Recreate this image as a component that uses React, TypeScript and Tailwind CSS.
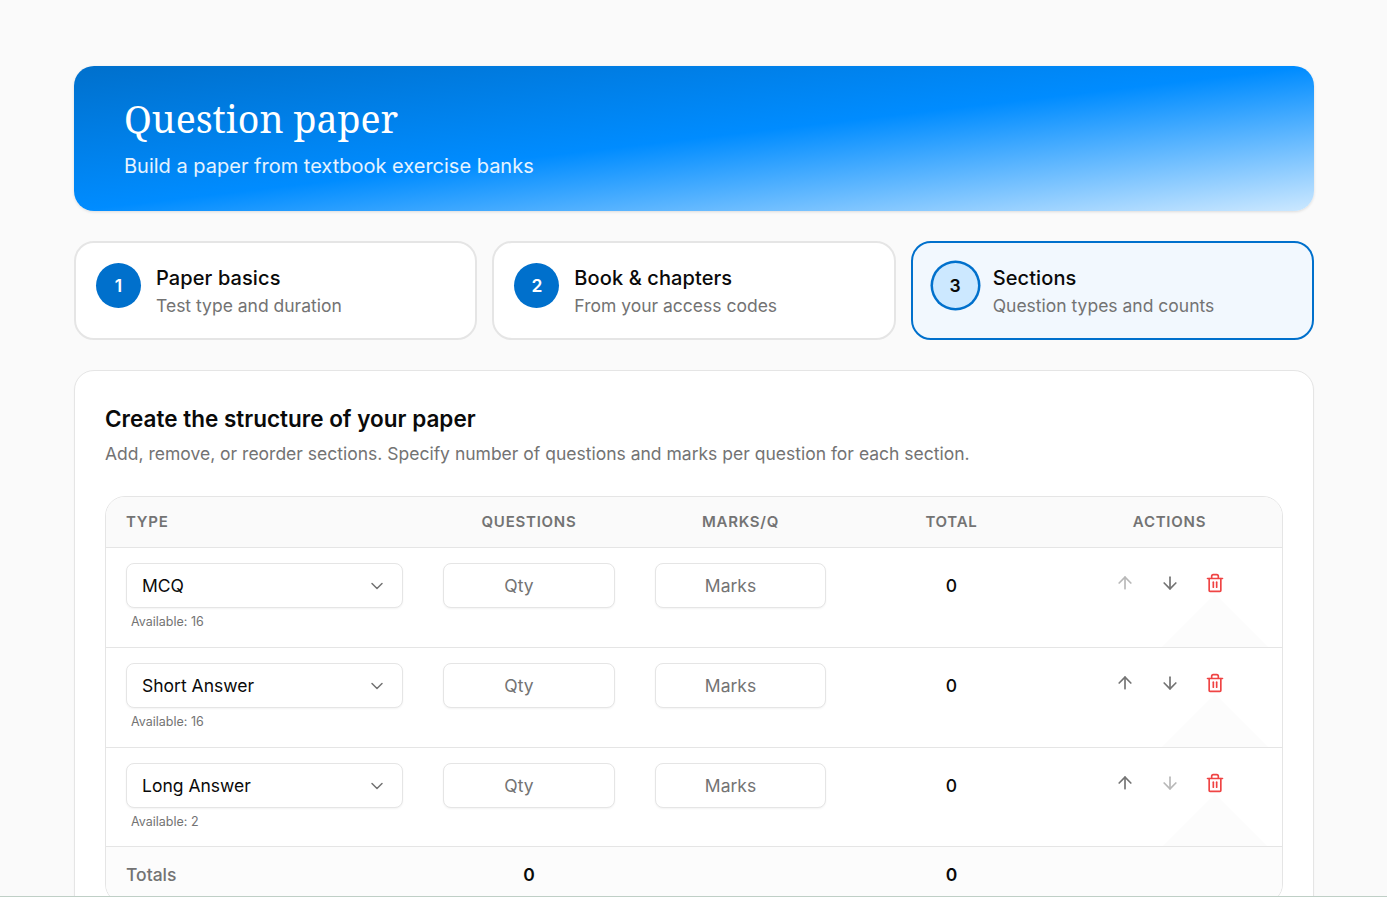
import { ArrowDown, ArrowUp, ChevronDown } from "lucide-react";
import clsx from "clsx";

interface Step {
  id: number;
  title: string;
  hint: string;
}

interface Section {
  type: string;
  available: number;
  total: number;
}

const STEPS: Step[] = [
  { id: 1, title: "Paper basics", hint: "Test type and duration" },
  { id: 2, title: "Book & chapters", hint: "From your access codes" },
  { id: 3, title: "Sections", hint: "Question types and counts" },
];

const SECTIONS: Section[] = [
  { type: "MCQ", available: 16, total: 0 },
  { type: "Short Answer", available: 16, total: 0 },
  { type: "Long Answer", available: 2, total: 0 },
];

const CURRENT_STEP = 3;

const COLUMNS = "grid grid-cols-[317px_212px_211px_211px_1fr]";

function TrashIcon() {
  return (
    <svg
      viewBox="0 0 24 24"
      className="size-5"
      fill="none"
      stroke="currentColor"
      strokeWidth={2}
      strokeLinecap="round"
      strokeLinejoin="round"
    >
      <path d="M3 6.6h18" />
      <path d="M19 6.6V21c0 .6-.4 1-1 1H6c-.6 0-1-.4-1-1V6.6" />
      <path d="M8 6V4c0-1 1-2 2-2h4c1 0 2 1 2 2v2" />
      <path d="M10 11v6" />
      <path d="M14 11v6" />
    </svg>
  );
}

function Banner() {
  return (
    <header className="h-[145px] shrink-0 rounded-[20px] bg-[linear-gradient(to_bottom_right,#0070cc,#008cff_50%,#cce8ff)] px-[50px] pt-[28px] text-white shadow-[0_1px_3px_rgba(0,0,0,0.12)]">
      <h1 className="font-['Noto_Serif','Droid_Serif','DejaVu_Serif',serif] text-[37.5px] leading-[50px]">
        Question paper
      </h1>
      <p className="mt-[7px] text-[20px] leading-[30px] text-white/90">
        Build a paper from textbook exercise banks
      </p>
    </header>
  );
}

function StepCard({ step, active }: { step: Step; active: boolean }) {
  return (
    <li
      className={clsx(
        "flex h-[99px] gap-[15px] rounded-[20px] border-2 p-5",
        active ? "border-[#0070cc] bg-[#f2f8fe]" : "border-[#e5e5e5] bg-white",
      )}
    >
      <span
        className={clsx(
          "flex size-[45px] shrink-0 items-center justify-center rounded-full pt-px text-[17.5px] font-semibold",
          active
            ? "bg-[#cce8ff] text-[#0a0a0a] ring-[2.5px] ring-[#0070cc]"
            : "bg-[#0070cc] text-white",
        )}
      >
        {step.id}
      </span>
      <div>
        <p className="text-[20px] leading-[30px] font-medium tracking-[0.1px] text-[#0a0a0a]">
          {step.title}
        </p>
        <p className="text-[17.5px] leading-[25px] text-[#737373]">{step.hint}</p>
      </div>
    </li>
  );
}

function NumberField({ label }: { label: string }) {
  return (
    <div className="px-5 pt-[15px]">
      <input
        placeholder={label}
        aria-label={label}
        className="h-[45px] w-full rounded-[8px] border border-[#e5e5e5] bg-white pr-[35px] pl-[15px] text-center text-[17.5px] shadow-[0_1px_2px_rgba(0,0,0,0.05)] placeholder:text-[#737373]"
      />
    </div>
  );
}

function SectionRow({ section, first, last }: { section: Section; first: boolean; last: boolean }) {
  return (
    <div
      className={clsx(
        COLUMNS,
        "relative overflow-hidden border-b border-[#e5e5e5]",
        last ? "h-[99px]" : "h-[100px]",
      )}
    >
      <div className="px-5 pt-[15px]">
        <button className="flex h-[45px] w-full items-center justify-between rounded-[8px] border border-[#e5e5e5] bg-white px-[15px] text-[17.5px] text-[#0a0a0a] shadow-[0_1px_2px_rgba(0,0,0,0.05)]">
          <span className="pt-px">{section.type}</span>
          <ChevronDown className="size-5 text-[#737373]" strokeWidth={1.8} />
        </button>
        <p className="mt-[4px] pl-[5px] text-[12.5px] leading-[19px] text-[#737373]">
          Available: {section.available}
        </p>
      </div>
      <NumberField label="Qty" />
      <NumberField label="Marks" />
      <p className="pt-[25px] text-center text-[17.5px] leading-[25px] font-medium text-[#0a0a0a]">
        {section.total}
      </p>
      <div className="flex justify-center pt-[15px] text-[#737373]">
        <button className={clsx("flex h-10 w-[45px] items-center justify-center", first && "opacity-50")}>
          <ArrowUp className="size-5" />
        </button>
        <button className={clsx("flex h-10 w-[45px] items-center justify-center", last && "opacity-50")}>
          <ArrowDown className="size-5" />
        </button>
        <button className="relative flex h-10 w-[45px] items-center justify-center text-[#ef4444]">
          <span className="absolute top-[31px] left-1/2 size-[80px] origin-top-left rotate-45 bg-[#fcfcfc]" />
          <TrashIcon />
        </button>
      </div>
    </div>
  );
}

function SectionTable() {
  return (
    <div className="mt-[28px] overflow-hidden rounded-[20px] border border-[#e5e5e5]">
      <div
        className={clsx(
          COLUMNS,
          "h-[51px] items-center border-b border-[#e5e5e5] bg-[#fafafa] text-center text-[15px] font-semibold tracking-[0.05em] text-[#737373] uppercase",
        )}
      >
        <span className="pl-5 text-left">Type</span>
        <span>Questions</span>
        <span>Marks/Q</span>
        <span>Total</span>
        <span>Actions</span>
      </div>
      {SECTIONS.map((section, i) => (
        <SectionRow
          key={section.type}
          section={section}
          first={i === 0}
          last={i === SECTIONS.length - 1}
        />
      ))}
      <div
        className={clsx(
          COLUMNS,
          "h-[56px] items-center bg-[#fcfcfc] text-center text-[17.5px] font-semibold text-[#0a0a0a]",
        )}
      >
        <span className="pl-5 text-left font-medium text-[#737373]">Totals</span>
        <span>0</span>
        <span />
        <span>0</span>
        <span />
      </div>
    </div>
  );
}

export default function App() {
  return (
    <div className="h-screen overflow-hidden border-b border-[#bfcfc6] bg-[#fafafa] font-[Inter,sans-serif]">
      <main className="ml-[74px] flex w-[1240px] flex-col pt-[66px]">
        <Banner />

        <ol className="mt-[30px] grid grid-cols-3 gap-[15px]">
          {STEPS.map((step) => (
            <StepCard key={step.id} step={step} active={step.id === CURRENT_STEP} />
          ))}
        </ol>

        <section className="mt-[30px] rounded-[20px] border border-[#e5e5e5] bg-white p-[30px] shadow-[0_1px_2px_rgba(0,0,0,0.04)]">
          <h2 className="text-[22.5px] leading-[35px] font-semibold text-[#0a0a0a]">
            Create the structure of your paper
          </h2>
          <p className="mt-[3px] text-[17.5px] leading-[29px] text-[#737373]">
            Add, remove, or reorder sections. Specify number of questions and marks per question for each section.
          </p>
          <SectionTable />
        </section>
      </main>
    </div>
  );
}
